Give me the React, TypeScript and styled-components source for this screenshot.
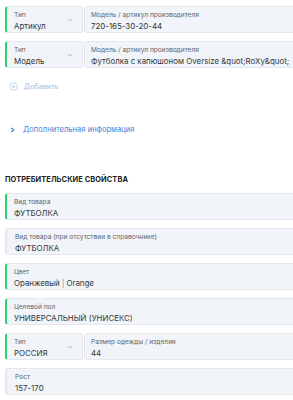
import styled, { createGlobalStyle } from "styled-components";

const GlobalStyle = createGlobalStyle`
  html, body {
    margin: 0;
    padding: 0;
    background: #ffffff;
    overflow: hidden;
  }
  body {
    font-family: Inter, "Noto Sans", sans-serif;
    color: #1f2328;
  }
`;

const Page = styled.div`
  width: 300px;
  padding: 6px 0 0 5px;
  box-sizing: border-box;
`;

const Stack = styled.div`
  display: flex;
  flex-direction: column;
  gap: 8px;
`;

const Row = styled.div`
  display: flex;
  gap: 1px;
`;

const Box = styled.div<{ $accent?: boolean; $grow?: boolean; $w?: number }>`
  position: relative;
  height: 27px;
  box-sizing: border-box;
  background: #f1f4f8;
  border: 1px solid #e4e7eb;
  border-left: 2px solid ${(p) => (p.$accent ? "#2fd06a" : "#e4e7eb")};
  border-radius: 3px;
  padding: 4px 0 0 ${(p) => (p.$accent ? 7 : 8)}px;
  ${(p) => (p.$grow ? "flex: 1; min-width: 0;" : "")}
  ${(p) => (p.$w ? `width: ${p.$w}px; flex: none;` : "")}
  display: flex;
  flex-direction: column;
`;

const InputBox = styled(Box)`
  border-left: 1px solid #e4e7eb;
  padding-left: 6px;
`;

const Label = styled.div`
  font-size: 6.6px;
  line-height: 9px;
  color: #60666d;
`;

const Value = styled.div`
  font-size: 7.9px;
  line-height: 12px;
  color: #33383d;
  white-space: nowrap;
`;

const Chevron = styled.svg`
  position: absolute;
  right: 9px;
  top: 10px;
  width: 6px;
  height: 6px;
`;

const AddLink = styled.div`
  display: flex;
  align-items: center;
  gap: 6px;
  margin: 14px 0 0 4px;
  font-size: 7px;
  font-weight: 600;
  color: #b6cdee;
`;

const MoreLink = styled.div`
  display: flex;
  align-items: center;
  gap: 8px;
  margin: 34px 0 0 5px;
  font-size: 7.6px;
  color: #4b82d6;
`;

const Heading = styled.h2`
  margin: 41px 0 9px 0;
  font-size: 7.4px;
  font-weight: 700;
  color: #1c1f23;
  letter-spacing: 0.1px;
`;

const Sep = styled.span`
  color: #8a9098;
  margin: 0 2px;
`;

function Select({ label, value }: { label: string; value: string }) {
  return (
    <Box $accent $w={78}>
      <Label>{label}</Label>
      <Value>{value}</Value>
      <Chevron viewBox="0 0 6 6">
        <path d="M1 2 L3 4 L5 2" fill="none" stroke="#a9aeb5" strokeWidth="0.8" />
      </Chevron>
    </Box>
  );
}

function Field({ label, value, accent }: { label: string; value: React.ReactNode; accent?: boolean }) {
  return (
    <Box $accent={accent} $grow>
      <Label>{label}</Label>
      <Value>{value}</Value>
    </Box>
  );
}

export default function App() {
  return (
    <Page>
      <GlobalStyle />
      <Stack>
        <Row>
          <Select label="Тип" value="Артикул" />
          <InputBox $grow>
            <Label>Модель / артикул производителя</Label>
            <Value>720-165-30-20-44</Value>
          </InputBox>
        </Row>
        <Row>
          <Select label="Тип" value="Модель" />
          <InputBox $grow>
            <Label>Модель / артикул производителя</Label>
            <Value>Футболка с капюшоном Oversize &amp;quot;RoXy&amp;quot;</Value>
          </InputBox>
        </Row>
      </Stack>

      <AddLink>
        <svg width="9" height="9" viewBox="0 0 10 10">
          <circle cx="5" cy="5" r="4.2" fill="none" stroke="#b6cdee" strokeWidth="0.9" />
          <path d="M5 3 V7 M3 5 H7" stroke="#b6cdee" strokeWidth="0.9" />
        </svg>
        Добавить
      </AddLink>

      <MoreLink>
        <svg width="5" height="6" viewBox="0 0 5 6">
          <path d="M1.2 0.8 L3.6 3 L1.2 5.2" fill="none" stroke="#2f6fd0" strokeWidth="1.1" />
        </svg>
        Дополнительная информация
      </MoreLink>

      <Heading>ПОТРЕБИТЕЛЬСКИЕ СВОЙСТВА</Heading>

      <Stack>
        <Field accent label="Вид товара" value="ФУТБОЛКА" />
        <Field label="Вид товара (при отсутствии в справочнике)" value="ФУТБОЛКА" />
        <Field
          accent
          label="Цвет"
          value={
            <>
              Оранжевый<Sep>|</Sep>Orange
            </>
          }
        />
        <Field accent label="Целевой пол" value="УНИВЕРСАЛЬНЫЙ (УНИСЕКС)" />
        <Row>
          <Select label="Тип" value="РОССИЯ" />
          <InputBox $grow>
            <Label>Размер одежды / изделия</Label>
            <Value>44</Value>
          </InputBox>
        </Row>
        <Field label="Рост" value="157-170" />
      </Stack>
    </Page>
  );
}
